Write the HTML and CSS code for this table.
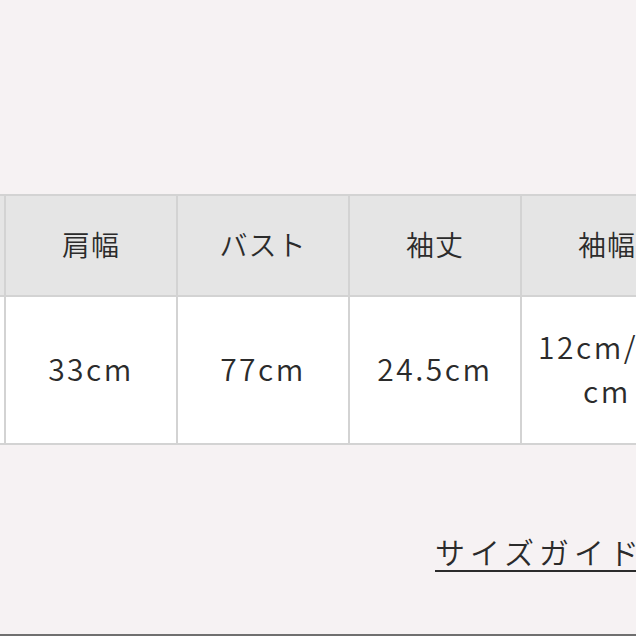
FILE: index.html
```html
<!DOCTYPE html>
<html lang="ja">
<head>
<meta charset="utf-8">
<link rel="stylesheet" href="styles.css">
</head>
<body>
<main class="page">
  <div class="size-table">
    <div class="cell head">着丈</div>
    <div class="cell head">肩幅</div>
    <div class="cell head">バスト</div>
    <div class="cell head">袖丈</div>
    <div class="cell head">袖幅</div>
    <div class="cell body">55cm</div>
    <div class="cell body">33cm</div>
    <div class="cell body">77cm</div>
    <div class="cell body">24.5cm</div>
    <div class="cell body wrap">12cm/13cm</div>
  </div>
  <div class="guide-row">
    <a class="guide" href="#">サイズガイド</a>
  </div>
  <div class="spacer"></div>
  <div class="bottom-line"></div>
</main>
</body>
</html>
```
FILE: styles.css
```css
html, body {
  margin: 0;
  padding: 0;
}
body {
  background: #f6f2f3;
  font-family: "Noto Sans CJK JP", "Noto Sans", sans-serif;
  font-weight: 350;
  color: #2b2b2b;
  overflow: hidden;
}
.page {
  display: flex;
  flex-direction: column;
  height: 636px;
  padding-top: 194px;
  box-sizing: border-box;
}
.size-table {
  display: grid;
  grid-template-columns: repeat(5, 170px);
  grid-template-rows: 99px 146px;
  gap: 2px;
  padding: 2px;
  background: #d3d3d3;
  margin-left: -168px;
  width: max-content;
}
.cell {
  display: flex;
  align-items: center;
  justify-content: center;
  text-align: center;
  box-sizing: border-box;
}
.head {
  background: #e5e5e5;
  font-size: 28px;
  letter-spacing: 1px;
  padding-bottom: 4px;
}
.body {
  background: #ffffff;
  font-size: 30px;
  letter-spacing: 2.5px;
  line-height: 44px;
  padding-bottom: 5px;
}
.wrap {
  padding-left: 14px;
  padding-right: 14px;
  word-break: break-all;
}
.guide-row {
  margin-top: 84px;
  padding-left: 435px;
  white-space: nowrap;
}
.guide {
  color: #2b2b2b;
  font-size: 30px;
  letter-spacing: 5px;
  line-height: 44px;
  text-decoration: underline;
  text-decoration-thickness: 2px;
  text-underline-offset: 6px;
}
.spacer {
  flex: 1;
}
.bottom-line {
  height: 2px;
  background: #6f6f6f;
}
```
